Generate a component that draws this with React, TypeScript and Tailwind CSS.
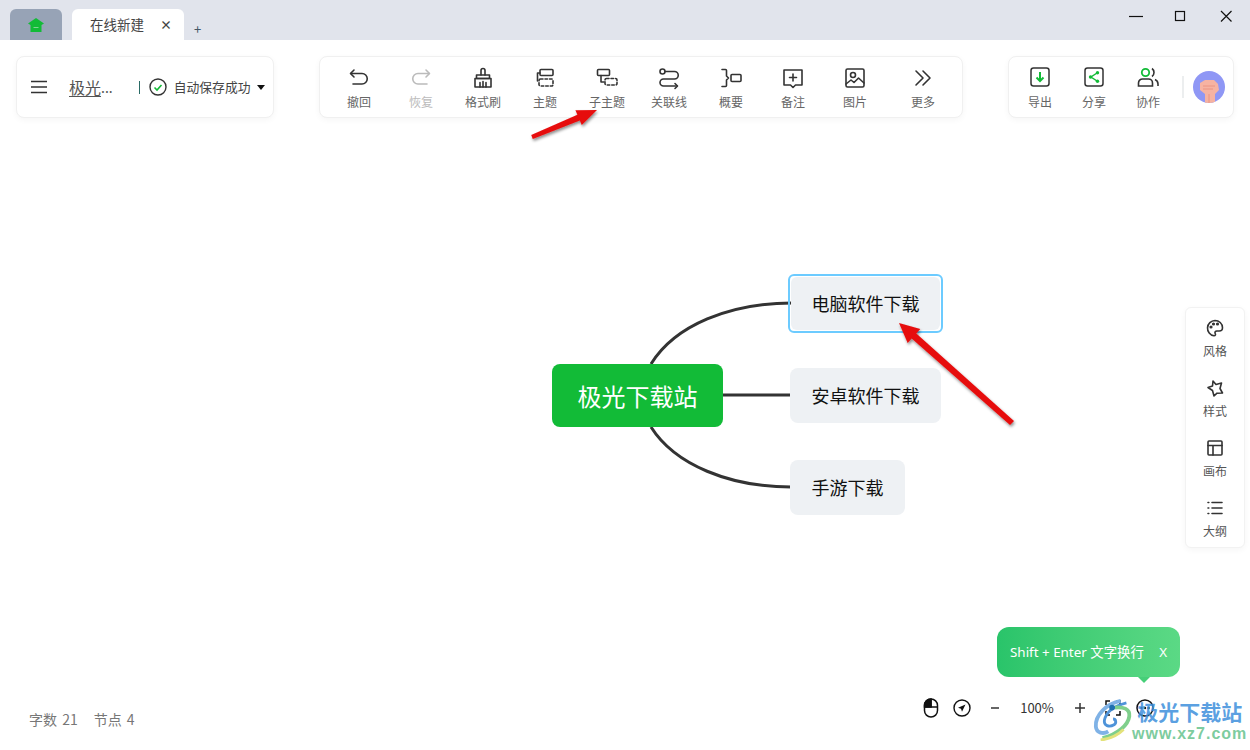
import React from "react";

const ic = { fill: "none", stroke: "#333", strokeWidth: 1.6, strokeLinecap: "round", strokeLinejoin: "round" } as const;

const Ico = ({ children, w = 24, h = 24 }: { children: React.ReactNode; w?: number; h?: number }) => (
  <svg width={w} height={h} viewBox={`0 0 ${w} ${h}`} {...ic}>{children}</svg>
);

const tools: { label: string; w: string; faded?: boolean; icon: React.ReactNode }[] = [
  { label: "撤回", w: "w-[62px]", icon: <Ico><path d="M7 4 3.5 7.5 7 11" /><path d="M4 7.5h11a5.2 5.2 0 0 1 0 10.5H6" /></Ico> },
  { label: "恢复", w: "w-[62px]", faded: true, icon: <Ico><g stroke="#bbb"><path d="M17 4l3.5 3.5L17 11" /><path d="M20 7.5H9a5.2 5.2 0 0 0 0 10.5h9" /></g></Ico> },
  { label: "格式刷", w: "w-[62px]", icon: <Ico><path d="M10 9V4.5a2 2 0 0 1 4 0V9" /><path d="M5.5 9h13v3.5h-13z" /><path d="M4 12.5h16V21H4z" /><path d="M9 16.5V21M12 15.5V21M15 16.5V21" /></Ico> },
  { label: "主题", w: "w-[62px]", icon: <Ico><rect x="7" y="3.5" width="13" height="6" rx="1" /><path d="M7 7H4.500v8" /><rect x="6" y="13" width="14" height="7" rx="1.500" strokeDasharray="2.500 2" /></Ico> },
  { label: "子主题", w: "w-[62px]", icon: <Ico><rect x="2.500" y="3.500" width="12" height="6" rx="1" /><path d="M6 9.500v6.500h3" /><rect x="10" y="12.500" width="12" height="6.500" rx="1.500" strokeDasharray="2.500 2" /></Ico> },
  { label: "关联线", w: "w-[62px]", icon: <Ico><circle cx="5.500" cy="5.500" r="2.500" /><path d="M8 5.500h9.500a3 3 0 0 1 0 7.500h-11a3 3 0 0 0 0 7H20" /><path d="M18 17.500l2.500 2.500-2.500 2.500" /></Ico> },
  { label: "概要", w: "w-[62px]", icon: <Ico><path d="M3 3.500h3.500a1 1 0 0 1 1 1V10l2 2-2 2v5.500a1 1 0 0 1-1 1H3" /><rect x="12" y="8.500" width="10" height="7" rx="1" /></Ico> },
  { label: "备注", w: "w-[62px]", icon: <Ico><path d="M3 4h18v15h-6.500L12 21.500 9.500 19H3z" /><path d="M12 8v7M8.500 11.500h7" /></Ico> },
  { label: "图片", w: "w-[62px]", icon: <Ico><rect x="3" y="3" width="18" height="18" rx="1.500" /><circle cx="10" cy="9" r="2.500" /><path d="M3 18l5-4 3 2.500 4.500-4.500 5.500 5" /></Ico> },
  { label: "更多", w: "w-[74px]", icon: <Ico><path d="M5 5l7 7-7 7M12 5l7 7-7 7" /></Ico> },
];

const side: { label: string; icon: React.ReactNode }[] = [
  { label: "风格", icon: <Ico w={20} h={20}><path d="M10 2.500a7.700 7.700 0 0 0-1 15.300c1.500 0 1.800-1.300 1.200-2.300-.7-1.300.2-2.500 1.600-2.500h2.400c2 0 3.300-1.300 3.300-3.300C17.500 5.500 14 2.500 10 2.500z" /><circle cx="6" cy="9" r=".8" /><circle cx="8.500" cy="6" r=".8" /><circle cx="12.500" cy="6" r=".8" /></Ico> },
  { label: "样式", icon: <Ico w={20} h={20}><path d="M8 3l3 3.500 5.500-1.500-1.500 5.500 2.500 4.500-5.500.2L9 18l-1.500-5.500L3 9.500l4.500-1.500z" /></Ico> },
  { label: "画布", icon: <Ico w={20} h={20}><rect x="3" y="3" width="14" height="14" rx="1" /><path d="M3 7.500h14M8 7.500V17" /></Ico> },
  { label: "大纲", icon: <Ico w={20} h={20}><path d="M7 4.500h10M7 10h10M7 15.500h10" /><path d="M3 4.500h.8M3 10h.8M3 15.500h.8" /></Ico> },
];

const Node = ({ text, cls }: { text: string; cls: string }) => (
  <div className={`absolute flex items-center justify-center rounded-[8px] text-[18px] ${cls}`}>{text}</div>
);

export default function App() {
  return (
    <div className="relative flex h-[750px] w-[1250px] flex-col overflow-hidden bg-white font-['Noto_Sans_CJK_SC','Liberation_Sans',sans-serif] text-[#333]">
      {/* Mind map canvas */}
      <div className="absolute inset-0">
        <svg width="1250" height="750" className="absolute left-0 top-0" fill="none" stroke="#333" strokeWidth="3">
          <path d="M651 364C675 325 730 303 792 303" />
          <path d="M723 395H791" />
          <path d="M651 427C675 465 730 487 791 487" />
        </svg>
        <Node text="极光下载站" cls="left-[552px] top-[364px] h-[63px] w-[171px] bg-[#12bb37] text-[24px] text-white" />
        <div className="absolute left-[788px] top-[274px] h-[59px] w-[155px] rounded-[6px] border-2 border-[#6ccbff] p-px">
          <div className="flex h-full w-full items-center justify-center rounded-[6px] bg-[#eef1f4] text-[18px] text-[#111]">电脑软件下载</div>
        </div>
        <Node text="安卓软件下载" cls="left-[790px] top-[368px] h-[55px] w-[151px] bg-[#eef1f4] text-[#111]" />
        <Node text="手游下载" cls="left-[790px] top-[460px] h-[55px] w-[115px] bg-[#eef1f4] text-[#111]" />
      </div>

      {/* Title bar */}
      <div className="relative flex h-10 shrink-0 bg-[#e1e4ec]">
        <div className="ml-[10px] mt-[9px] flex h-[31px] w-[52px] items-center justify-center rounded-t-[6px] bg-[#97a3b6]">
          <svg width="16" height="14" viewBox="0 0 16 14"><path d="M8 0 16 5.500 13.500 7V14h-11V7L0 5.500z" fill="#12bb37" /><path d="M5.500 9.500h5" stroke="#7fd493" strokeWidth="1" /></svg>
        </div>
        <div className="ml-[10px] mt-[9px] flex h-[31px] w-[112px] items-center rounded-t-[6px] bg-white pl-[18px] text-[13.500px] text-[#444]">
          <span>在线新建</span>
          <span className="ml-[16px] text-[12px] font-bold leading-none">×</span>
        </div>
        <span className="ml-[10px] mt-[21px] text-[13px] leading-[15px] text-[#456]">+</span>
        <div className="ml-auto flex h-full items-start">
          <svg width="120" height="32" viewBox="0 0 120 32" fill="none" stroke="#111" strokeWidth="1.200" className="mr-px">
            <path d="M0 16.500h14" />
            <rect x="46.500" y="11.500" width="9" height="9" />
            <path d="M92 11l10.500 10.500M102.500 11 92 21.500" />
          </svg>
        </div>
      </div>

      {/* Toolbar row */}
      <div className="relative mt-4 flex h-[62px] shrink-0 justify-between px-4">
        <div className="flex w-[258px] items-center rounded-[8px] border border-[#f0f0f0] bg-white shadow-[0_2px_6px_rgba(0,0,0,0.04)]">
          <svg width="18" height="14" viewBox="0 0 18 14" stroke="#333" strokeWidth="1.700" className="ml-[13px]"><path d="M1 1.500h16M1 7h16M1 12.500h16" /></svg>
          <span className="ml-[21px] text-[16px] leading-6 text-[#555] underline underline-offset-2">极光</span>
          <span className="text-[14px] text-[#555]">...</span>
          <span className="ml-[26px] h-[13px] w-px bg-[#2a6b66]" />
          <svg width="18" height="18" viewBox="0 0 18 18" fill="none" className="ml-[9px]"><circle cx="9" cy="9" r="8" stroke="#333" strokeWidth="1.400" /><path d="M5.500 9.500 8 12l4.500-5" stroke="#12bb37" strokeWidth="1.600" /></svg>
          <span className="ml-[7px] text-[12.800px] text-[#444]">自动保存成功</span>
          <svg width="8" height="5" viewBox="0 0 8 5" className="ml-[7px]"><path d="M0 0h8L4 5z" fill="#111" /></svg>
        </div>

        <div className="flex w-[644px] items-center rounded-[8px] border border-[#f0f0f0] bg-white pl-[8px] shadow-[0_2px_6px_rgba(0,0,0,0.04)]">
          {tools.map((t) => (
            <div key={t.label} className={`flex flex-col items-center pt-[3px] ${t.w}`}>
              <div className="flex h-[24px] items-center">{t.icon}</div>
              <span className={`mt-[3px] text-[12px] leading-[18px] ${t.faded ? "text-[#bbb]" : "text-[#666]"}`}>{t.label}</span>
            </div>
          ))}
        </div>

        <div className="flex w-[226px] items-center rounded-[8px] border border-[#f0f0f0] bg-white pl-[4px] shadow-[0_2px_6px_rgba(0,0,0,0.04)]">
          <div className="flex w-[54px] flex-col items-center pt-[3px]">
            <svg width="20" height="20" viewBox="0 0 20 20" fill="none"><rect x="1" y="1" width="18" height="18" rx="2.500" stroke="#333" strokeWidth="1.500" /><path d="M10 5v9M6.500 10.500 10 14l3.500-3.500" stroke="#12bb37" strokeWidth="2" /></svg>
            <span className="mt-[6px] text-[12px] leading-[18px] text-[#666]">导出</span>
          </div>
          <div className="flex w-[54px] flex-col items-center pt-[3px]">
            <svg width="20" height="20" viewBox="0 0 20 20" fill="none"><rect x="1" y="1" width="18" height="18" rx="2.500" stroke="#333" strokeWidth="1.500" /><path d="M13 6 7 10l6 4" stroke="#12bb37" strokeWidth="1.500" /><circle cx="13.500" cy="5.800" r="1.700" fill="#12bb37" /><circle cx="6.500" cy="10" r="1.700" fill="#12bb37" /><circle cx="13.500" cy="14.200" r="1.700" fill="#12bb37" /></svg>
            <span className="mt-[6px] text-[12px] leading-[18px] text-[#666]">分享</span>
          </div>
          <div className="flex w-[54px] flex-col items-center pt-[3px]">
            <svg width="22" height="20" viewBox="0 0 22 20" fill="none"><circle cx="8.500" cy="5.500" r="3.700" stroke="#12bb37" strokeWidth="1.800" /><path d="M1.500 19v-3a4 4 0 0 1 4-4h6a4 4 0 0 1 4 4v3zM15 1.500a5 5 0 0 1 0 8M18 12.500a5 5 0 0 1 3 4.500v2" stroke="#333" strokeWidth="1.600" /></svg>
            <span className="mt-[6px] text-[12px] leading-[18px] text-[#666]">协作</span>
          </div>
          <span className="ml-[7px] h-[22px] w-[2px] bg-[#eceeef]" />
          <div className="ml-[9px] flex h-8 w-8 items-end justify-center overflow-hidden rounded-full bg-[#8f97f5]">
            <svg width="24" height="28" viewBox="0 0 24 28"><path d="M3 8l5-3h9l4 4 1 6-4 4v9H8v-9l-5-4z" fill="#f6b3a2" /><path d="M6 11h12M6 14h10M12 19v9" stroke="#e88d7c" strokeWidth=".8" fill="none" /></svg>
          </div>
        </div>
      </div>

      {/* Side panel */}
      <div className="relative mt-[189px] flex justify-end pr-[5px]">
        <div className="flex h-[241px] w-[60px] flex-col items-center gap-[18px] rounded-[6px] border border-[#f2f2f2] bg-white pt-[10px] shadow-[0_2px_6px_rgba(0,0,0,0.04)]">
          {side.map((s) => (
            <div key={s.label} className="flex flex-col items-center">
              {s.icon}
              <span className="mt-[4px] text-[12px] leading-[18px] text-[#555]">{s.label}</span>
            </div>
          ))}
        </div>
      </div>

      {/* Status row */}
      <div className="relative mt-auto flex h-[60px] justify-between pl-[29px]">
        <div className="flex gap-[16px] pt-[17px] text-[14px] leading-[24px] text-[#777] [word-spacing:2px]">
          <span>字数 21</span>
          <span>节点 4</span>
        </div>
        <div className="mr-[96px] mt-[6px] flex h-[24px] items-center">
          <svg width="18" height="20" viewBox="0 0 18 20" fill="none" stroke="#111" strokeWidth="1.500" className="mr-[13px]"><rect x="2.500" y="1" width="13" height="18" rx="6.500" /><path d="M2.500 9h13M9 1v8" /><path d="M2.500 9V7.500A6.500 6.500 0 0 1 9 1v8z" fill="#111" /></svg>
          <svg width="18" height="18" viewBox="0 0 18 18" fill="none" className="mr-[19px]"><circle cx="9" cy="9" r="8" stroke="#111" strokeWidth="1.400" /><path d="M12.500 5.500 5 8.800l3 1 1 3z" fill="#111" /></svg>
          <svg width="10" height="10" viewBox="0 0 10 10" stroke="#333" strokeWidth="1.500"><path d="M1 5h8" /></svg>
          <span className="ml-[17px] w-[40px] text-center text-[13px] text-[#333]">100%</span>
          <svg width="10" height="10" viewBox="0 0 10 10" stroke="#333" strokeWidth="1.500" className="ml-[18px]"><path d="M0 5h10M5 0v10" /></svg>
          <svg width="16" height="16" viewBox="0 0 16 16" fill="none" stroke="#111" strokeWidth="1.500" className="ml-[20px]"><path d="M1 5V1h4M11 1h4v4M15 11v4h-4M5 15H1v-4" /></svg>
          <svg width="18" height="18" viewBox="0 0 18 18" fill="none" className="ml-[15px]"><circle cx="9" cy="9" r="8" stroke="#111" strokeWidth="1.500" /><circle cx="5.500" cy="9" r="1.200" fill="#111" /><circle cx="9" cy="9" r="1.200" fill="#111" /><circle cx="12.500" cy="9" r="1.200" fill="#111" /></svg>
        </div>
      </div>

      {/* Tip bubble */}
      <div className="absolute left-[997px] top-[627px] flex h-[50px] w-[183px] items-center justify-between rounded-[12px] bg-gradient-to-r from-[#29c46a] to-[#5bd985] pl-[13px] pr-[13px] text-[13.400px] text-white">
        <span className="font-['Noto_Sans','Noto_Sans_CJK_SC',sans-serif]">Shift + Enter 文字换行</span>
        <span className="font-['Noto_Sans',sans-serif]">X</span>
        <span className="absolute left-[141px] top-[50px] h-0 w-0 border-x-[6px] border-t-[6px] border-x-transparent border-t-[#46cf78]" />
      </div>

      {/* Annotation arrows */}
      <svg width="1250" height="750" className="pointer-events-none absolute left-0 top-0">
        <defs>
          <filter id="s" x="-20%" y="-20%" width="140%" height="140%"><feDropShadow dx="1" dy="2" stdDeviation="1.500" floodColor="#000" floodOpacity="0.45" /></filter>
        </defs>
        <g fill="#e60d0d" filter="url(#s)">
          <path d="M532.800 138.900 579.800 120.500 581.800 125 597 110 575.400 110.200 577.400 114.700 531.200 135.100z" />
          <path d="M1014 421 916.300 333.500 920.300 329 899 323 907.700 343 911.700 338.500 1010 425z" />
        </g>
      </svg>

      {/* Watermark */}
      <div className="absolute left-[1092px] top-[698px] flex items-start">
        <svg width="44" height="43" viewBox="0 0 46 45" fill="none">
          <path d="M30 3C15 6 3 18 4 30c.6 7 8 8 13 5" stroke="#7fb2e6" strokeWidth="4" />
          <path d="M36 5C24 8 15 14 13 23c-1 6 5 8 10 5 3-2 2-6-1-6" stroke="#4e93d9" strokeWidth="3" />
          <path d="M24 10c8-1 16 1 15 9-1 9-12 19-28 23" stroke="#7fcf8c" strokeWidth="4" />
          <path d="M9 44c9-1 18-5 24-11" stroke="#e3e27a" strokeWidth="3" />
          <circle cx="21" cy="10" r="3" fill="#1f6fb0" />
        </svg>
        <div className="ml-[-4px] flex flex-col items-center whitespace-nowrap">
          <span className="text-[21px] font-bold leading-[26px] text-[#3d8fdc]/85">极光下载站</span>
          <span className="mt-[2px] font-['Liberation_Sans',sans-serif] text-[16px] font-bold leading-[15px] tracking-[1px] text-[#6cc592]/90">www.xz7.com</span>
        </div>
      </div>
    </div>
  );
}
